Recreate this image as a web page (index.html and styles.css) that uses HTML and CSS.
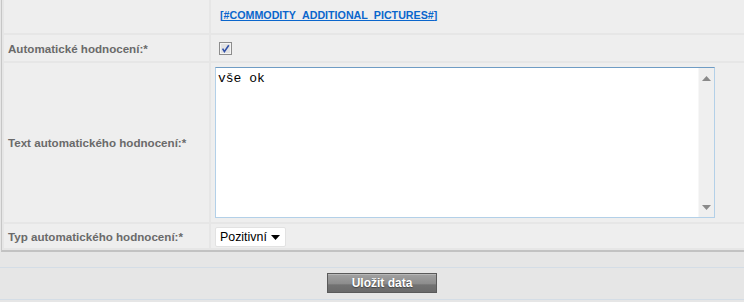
FILE: index.html
```html
<!DOCTYPE html>
<html lang="cs">
<head>
<meta charset="utf-8">
<title>Automatické hodnocení</title>
<link rel="stylesheet" href="styles.css">
</head>
<body>
<div class="page">
  <table class="form">
    <tr class="row-link">
      <td class="label"></td>
      <td class="value"><a class="tag-link" href="#">[#COMMODITY_ADDITIONAL_PICTURES#]</a></td>
    </tr>
    <tr class="row-check">
      <td class="label">Automatické hodnocení:*</td>
      <td class="value">
        <span class="checkbox" role="checkbox" aria-checked="true">
          <svg width="13" height="13" viewBox="0 0 13 13">
            <rect x="0.5" y="0.5" width="12" height="12" fill="#e2e2e2" stroke="#8c8c8c"/>
            <rect x="1.5" y="1.5" width="10" height="10" fill="none" stroke="#f4f4f4"/>
            <path d="M3.6 6.6 L5.4 9.6 L9.8 3.2" fill="none" stroke="#2f4fa8" stroke-width="1.6"/>
          </svg>
        </span>
      </td>
    </tr>
    <tr class="row-text">
      <td class="label">Text automatického hodnocení:*</td>
      <td class="value">
        <div class="textbox">
          <textarea class="text-input">vše ok</textarea>
          <div class="scrollbar">
            <svg width="9" height="5" viewBox="0 0 9 5"><path d="M0 5 L4.5 0 L9 5 Z" fill="#8a8a8a"/></svg>
            <svg width="9" height="5" viewBox="0 0 9 5"><path d="M0 0 L9 0 L4.5 5 Z" fill="#8a8a8a"/></svg>
          </div>
        </div>
      </td>
    </tr>
    <tr class="row-select">
      <td class="label">Typ automatického hodnocení:*</td>
      <td class="value">
        <span class="select-wrap">
          <select class="select">
            <option>Pozitivní</option>
            <option>Neutrální</option>
            <option>Negativní</option>
          </select>
          <svg class="select-arrow" width="9" height="5" viewBox="0 0 9 5"><path d="M0 0 L9 0 L4.5 5 Z" fill="#000"/></svg>
        </span>
      </td>
    </tr>
  </table>
  <div class="footer">
    <button class="save" type="button">Uložit data</button>
  </div>
</div>
</body>
</html>
```
FILE: styles.css
```css
html, body {
  margin: 0;
  padding: 0;
  background: #e6e6e6;
  overflow: hidden;
}

body {
  font-family: "Liberation Sans", Arial, sans-serif;
}

.page {
  width: 764px;
}

.form {
  border-collapse: separate;
  border-spacing: 2px;
  border-left: 1px solid #c6c6c6;
  border-bottom: 2px solid #c2c2c2;
  margin: -2px 0 0 1px;
  width: 763px;
  background: #e6e6e6;
}

.form td {
  background: #eeeeee;
  padding: 0;
  vertical-align: middle;
}

.label {
  width: 201px;
  padding: 0 0 0 4px !important;
  font-size: 11.6px;
  font-weight: bold;
  color: #6a6a6a;
  white-space: nowrap;
}

.row-link td {
  height: 33px;
}

.row-check td {
  height: 26px;
}

.row-text td {
  height: 159px;
}

.row-select td {
  height: 24px;
}

.tag-link {
  margin-left: 9px;
  position: relative;
  top: -3px;
  font-size: 10.7px;
  font-weight: bold;
  color: #0a66cc;
  text-decoration: underline;
}

.checkbox {
  display: block;
  width: 13px;
  height: 13px;
  margin-left: 8px;
  margin-top: 1px;
}

.checkbox svg {
  display: block;
}

.textbox {
  display: flex;
  width: 498px;
  height: 149px;
  margin-left: 4px;
  background: #ffffff;
  border: 1px solid #b3d0e8;
  border-top-color: #6f9cc4;
}

.text-input {
  flex: 1;
  border: 0;
  margin: 0;
  padding: 3px 2px;
  resize: none;
  outline: none;
  overflow: hidden;
  font-family: "Liberation Mono", "Courier New", monospace;
  font-size: 13px;
  color: #000;
  background: #fff;
}

.scrollbar {
  width: 16px;
  background: #efefef;
  border-left: 1px solid #f7f7f7;
  display: flex;
  flex-direction: column;
  justify-content: space-between;
  align-items: center;
  padding: 8px 0 7px;
  box-sizing: border-box;
}

.scrollbar svg {
  display: block;
}

.select-wrap {
  position: relative;
  display: inline-block;
  margin-left: 4px;
  vertical-align: middle;
}

.select {
  -webkit-appearance: none;
  appearance: none;
  width: 71px;
  height: 20px;
  margin: 1px 0 0 0;
  padding: 0 0 0 4px;
  border: 1px solid #e2e2e2;
  border-radius: 2px;
  background: #ffffff;
  font-family: "Liberation Sans", Arial, sans-serif;
  font-size: 12.4px;
  color: #000;
  display: block;
}

.select-arrow {
  position: absolute;
  right: 6px;
  top: 9px;
  pointer-events: none;
}

.footer {
  margin-top: 15px;
  border-top: 1px solid #d4dde6;
  border-bottom: 1px solid #d4dde6;
  height: 31px;
  display: flex;
  justify-content: center;
  align-items: flex-start;
}

.save {
  margin-top: 5px;
  width: 110px;
  height: 20px;
  padding: 0;
  border: 1px solid #5a5a5a;
  border-radius: 0;
  background: linear-gradient(#a2a2a2 0%, #8c8c8c 55%, #727272 60%, #6a6a6a 100%);
  box-shadow: inset 0 1px 0 #b8b8b8;
  color: #ffffff;
  font-family: "Liberation Sans", Arial, sans-serif;
  font-size: 12px;
  font-weight: bold;
  text-shadow: 0 1px 1px #444;
  cursor: pointer;
}
```
